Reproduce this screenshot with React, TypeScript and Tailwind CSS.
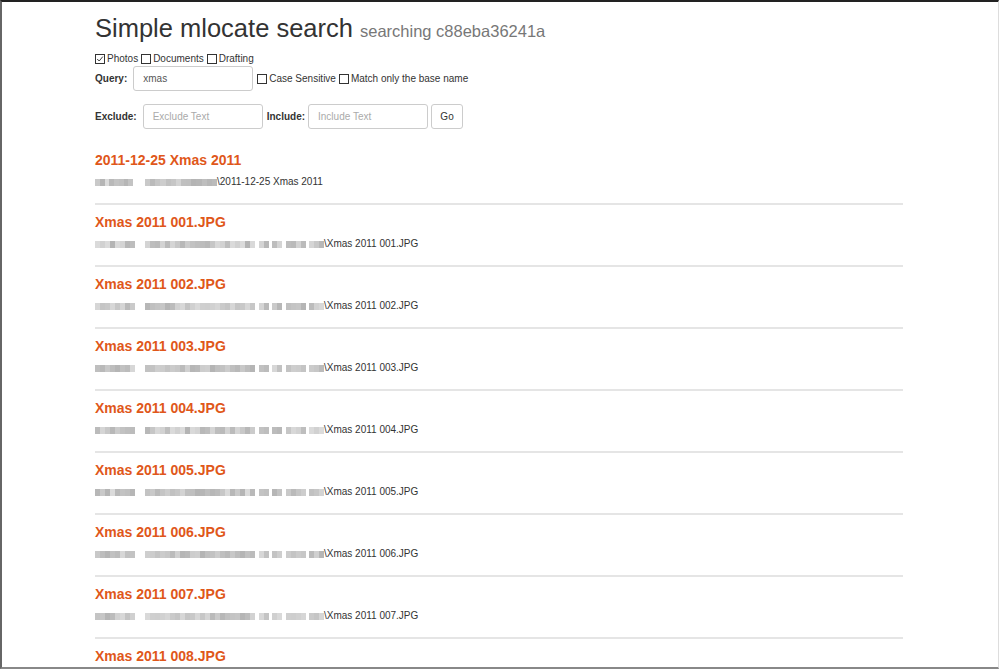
import React from 'react';

type Seg = [number, number]; // [width, gapAfter]

const shortMask: Seg[] = [[38, 12], [72, 0]];
const longMask: Seg[] = [[40, 10], [110, 4], [10, 3], [10, 4], [20, 3], [15, 0]];

const results = [
  { name: '2011-12-25 Xmas 2011', mask: shortMask },
  { name: 'Xmas 2011 001.JPG', mask: longMask },
  { name: 'Xmas 2011 002.JPG', mask: longMask },
  { name: 'Xmas 2011 003.JPG', mask: longMask },
  { name: 'Xmas 2011 004.JPG', mask: longMask },
  { name: 'Xmas 2011 005.JPG', mask: longMask },
  { name: 'Xmas 2011 006.JPG', mask: longMask },
  { name: 'Xmas 2011 007.JPG', mask: longMask },
  { name: 'Xmas 2011 008.JPG', mask: longMask },
];

// pixelated redaction of the folder path
const Redacted = ({ segs, seed }: { segs: Seg[]; seed: number }) => {
  let n = seed * 7 + 3;
  const shade = () => {
    n = (n * 37 + 11) % 101;
    return 180 + (n % 40);
  };
  return (
    <span className="inline-flex items-center">
      {segs.map(([w, gap], i) => {
        const cells = Math.max(1, Math.round(w / 5));
        return (
          <span key={i} className="flex h-[7px]" style={{ width: w, marginRight: gap }}>
            {Array.from({ length: cells }).map((_, j) => {
              const g = shade();
              return <span key={j} className="h-full flex-1" style={{ background: `rgb(${g},${g},${g})` }} />;
            })}
          </span>
        );
      })}
    </span>
  );
};

const Box = ({ checked }: { checked?: boolean }) => (
  <span className="inline-flex h-[10px] w-[10px] items-center justify-center border border-[#333] bg-white mr-[2px]">
    {checked && (
      <svg viewBox="0 0 10 10" className="h-[8px] w-[8px]">
        <path d="M1.5 5 L4 7.5 L8.5 2" fill="none" stroke="#333" strokeWidth="1.2" />
      </svg>
    )}
  </span>
);

const TextBox = ({ value, placeholder, w }: { value?: string; placeholder?: string; w: string }) => (
  <div className={`flex h-[25px] items-center rounded-[3px] border border-[#ccc] px-[9px] text-[10px] ${w}`}>
    {value ? <span className="text-[#555]">{value}</span> : <span className="text-[#aaa]">{placeholder}</span>}
  </div>
);

export default function App() {
  return (
    <div className="h-[669px] w-[999px] overflow-hidden border-t-2 border-l-2 border-b-2 border-r border-t-[#222] border-l-[#666] border-b-[#888] border-r-[#ddd] bg-white text-[#333] font-['Liberation_Sans',Arial,sans-serif]">
      <div className="ml-[93px] w-[808px]">
        <h1 className="mt-[9px] flex items-baseline text-[25.5px] leading-[34px] text-[#333]">
          Simple mlocate search
          <small className="ml-[7px] text-[16.5px] text-[#777]">searching c88eba36241a</small>
        </h1>

        <div className="mt-[4px] flex items-center gap-[3px] text-[10px] leading-[14px]">
          <label className="flex items-center"><Box checked />Photos</label>
          <label className="flex items-center"><Box />Documents</label>
          <label className="flex items-center"><Box />Drafting</label>
        </div>

        <div className="flex items-center text-[10px]">
          <span className="mr-[6px] font-bold">Query:</span>
          <TextBox value="xmas" w="w-[120px]" />
          <label className="ml-[4px] flex items-center"><Box />Case Sensitive</label>
          <label className="ml-[3px] flex items-center"><Box />Match only the base name</label>
        </div>

        <div className="mt-[13px] flex items-center text-[10px]">
          <span className="mr-[6px] font-bold">Exclude:</span>
          <TextBox placeholder="Exclude Text" w="w-[120px]" />
          <span className="ml-[4px] mr-[3px] font-bold">Include:</span>
          <TextBox placeholder="Include Text" w="w-[120px]" />
          <button className="ml-[3px] flex h-[25px] w-[32px] items-center justify-center rounded-[3px] border border-[#ccc] bg-white text-[10px] text-[#333]">
            Go
          </button>
        </div>

        <div className="mt-[21px]">
          {results.map((r, i) => (
            <div key={i}>
              {i > 0 && <div className="h-[2px] bg-[#e5e5e5]" />}
              <div className={i > 0 ? 'pt-[7px] pb-[14px]' : 'pb-[14px]'}>
                <div className="text-[14px] font-bold leading-[20px] text-[#e0571a]">{r.name}</div>
                <div className="mt-[5px] flex items-center text-[10px] leading-[14px]">
                  <Redacted segs={r.mask} seed={i} />
                  <span>\{r.name}</span>
                </div>
              </div>
            </div>
          ))}
        </div>
      </div>
    </div>
  );
}
